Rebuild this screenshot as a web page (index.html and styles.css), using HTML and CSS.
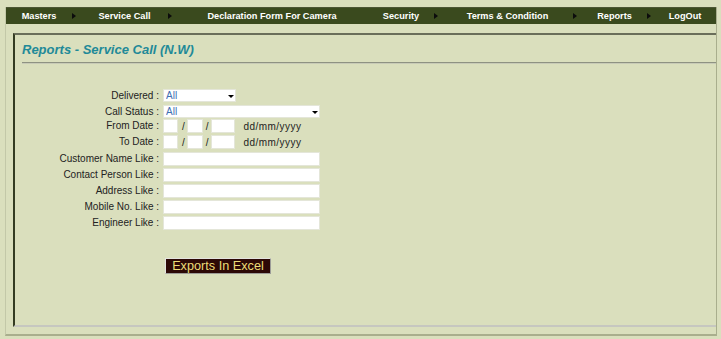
FILE: index.html
```html
<!DOCTYPE html>
<html lang="en">
<head>
    <meta charset="UTF-8">
    <meta name="viewport" content="width=device-width, initial-scale=1.0">
    <title>Reports - Service Call (N.W)</title>
    <link rel="stylesheet" href="styles.css">
</head>
<body>
<div class="frame">
    <!-- Top Menu -->
    <nav class="menu">
        <div class="menu-item m1"><span>Masters</span><i class="arrow"></i></div>
        <div class="menu-item m2"><span>Service Call</span><i class="arrow"></i></div>
        <div class="menu-item m3"><span>Declaration Form For Camera</span></div>
        <div class="menu-item m4"><span>Security</span><i class="arrow"></i></div>
        <div class="menu-item m5"><span>Terms &amp; Condition</span><i class="arrow"></i></div>
        <div class="menu-item m6"><span>Reports</span><i class="arrow"></i></div>
        <div class="menu-item m7"><span>LogOut</span></div>
    </nav>

    <div class="content">
        <div class="box">
            <h2 class="title">Reports - Service Call (N.W)</h2>
            <div class="rule"></div>

            <!-- Search Form -->
            <form class="search" action="#" method="get">
                <label class="lbl short">Delivered :</label>
                <div class="select w-short">
                    <select name="delivered"><option>All</option></select>
                    <svg class="caret" width="6" height="3" viewBox="0 0 6 3"><polygon points="0,0 6,0 3,3" fill="#000"/></svg>
                </div>

                <label class="lbl short">Call Status :</label>
                <div class="select w-long">
                    <select name="status"><option>All</option></select>
                    <svg class="caret" width="6" height="3" viewBox="0 0 6 3"><polygon points="0,0 6,0 3,3" fill="#000"/></svg>
                </div>

                <label class="lbl">From Date :</label>
                <div class="date">
                    <input type="text" class="d1"><span class="sep">/</span><input type="text" class="d2"><span class="sep s2">/</span><input type="text" class="d3"><span class="fmt">dd/mm/yyyy</span>
                </div>

                <label class="lbl">To Date :</label>
                <div class="date">
                    <input type="text" class="d1"><span class="sep">/</span><input type="text" class="d2"><span class="sep s2">/</span><input type="text" class="d3"><span class="fmt">dd/mm/yyyy</span>
                </div>

                <label class="lbl">Customer Name Like :</label>
                <input type="text" class="txt" name="customer">

                <label class="lbl">Contact Person Like :</label>
                <input type="text" class="txt" name="contact">

                <label class="lbl">Address Like :</label>
                <input type="text" class="txt" name="address">

                <label class="lbl">Mobile No. Like :</label>
                <input type="text" class="txt" name="mobile">

                <label class="lbl">Engineer Like :</label>
                <input type="text" class="txt" name="engineer">
            </form>

            <div class="actions">
                <button type="button" class="excel">Exports In Excel</button>
            </div>
        </div>
    </div>
</div>
</body>
</html>
```

FILE: styles.css
```css
body {
    margin: 0;
    background-color: #dadfbd;
    font-family: "Liberation Sans", Arial, sans-serif;
    font-size: 10px;
    color: #222;
}

.frame {
    margin: 7px 4px 0 5px;
    border-left: 1px solid #c3c8a8;
    border-right: 1px solid #a9ae8d;
    border-bottom: 2px solid #a9ae8d;
}

/* top menu */
.menu {
    display: flex;
    height: 17px;
    background-color: #3a4a1e;
    border-top: 1px solid #4c5634;
    box-sizing: border-box;
}

.menu-item {
    display: flex;
    align-items: center;
    color: #fff;
    font-weight: bold;
    font-size: 9.2px;
}

.menu-item span {
    flex: 1;
    text-align: center;
    white-space: nowrap;
}

.arrow {
    width: 0;
    height: 0;
    border-left: 4px solid #0c0c0c;
    border-top: 3px solid transparent;
    border-bottom: 3px solid transparent;
}

.m1 { width: 70px; }
.m2 { width: 96px; padding-left: 5px; box-sizing: border-box; }
.m3 { width: 196px; padding-left: 4px; box-sizing: border-box; }
.m4 { width: 70px; }
.m5 { width: 139px; padding-left: 4px; box-sizing: border-box; }
.m6 { width: 74px; padding-left: 5px; box-sizing: border-box; }
.m7 { flex: 1; padding-left: 3px; }

/* content box */
.content {
    padding: 9px 0 7px 7px;
}

.box {
    height: 294px;
    box-sizing: border-box;
    border-top: 2px solid #6a6e5a;
    border-left: 2px solid #343c22;
    border-bottom: 2px solid #c6c7c0;
}

.title {
    margin: 7px 0 0 7px;
    font-size: 13px;
    line-height: 16px;
    font-style: italic;
    font-weight: bold;
    color: #1f8a98;
}

.rule {
    margin: 4px 0 0 7px;
    border-top: 1px solid #8e9282;
    border-bottom: 1px solid #c8cbb7;
}

/* form grid */
.search {
    display: grid;
    grid-template-columns: 145px auto;
    grid-template-rows: 16px 14px 16px 17px 16px 16px 16px 16px 16px;
    column-gap: 3px;
    justify-items: start;
    align-items: start;
    margin-top: 25px;
}

.lbl {
    justify-self: end;
    line-height: 14px;
    padding-right: 1px;
    white-space: nowrap;
}

.lbl.short {
    line-height: 13px;
}

input[type="text"] {
    margin: 0;
    padding: 0 2px;
    height: 14px;
    border: 1px solid #e4e6d9;
    background-color: #fff;
    box-sizing: border-box;
    font-family: "Liberation Sans", Arial, sans-serif;
    font-size: 10px;
}

.txt { width: 157px; }

.select {
    position: relative;
    height: 13px;
}

.w-short { width: 73px; }
.w-long { width: 157px; }

.select select {
    -webkit-appearance: none;
    appearance: none;
    display: block;
    width: 100%;
    height: 100%;
    margin: 0;
    padding: 0 0 0 2px;
    border: 1px solid #e4e6d9;
    border-radius: 0;
    background-color: #fff;
    color: #3e6fb3;
    font-family: "Liberation Sans", Arial, sans-serif;
    font-size: 10px;
    line-height: 11px;
    box-sizing: border-box;
}

.caret {
    position: absolute;
    right: 2px;
    top: 6px;
}

.date {
    display: flex;
    align-items: center;
    height: 14px;
}

.date .d1 { width: 15px; }
.date .d2 { width: 16px; }
.date .d3 { width: 24px; }

.sep {
    margin: 0 2px 0 4px;
}

.sep.s2 {
    margin-left: 3px;
}

.fmt {
    margin-left: 9px;
    letter-spacing: 0.45px;
}

/* export button */
.actions {
    margin: 26px 0 0 150px;
}

.excel {
    display: block;
    width: 106px;
    height: 16px;
    padding: 0;
    background-color: #2c0906;
    color: #ecdd78;
    font-family: "Liberation Sans", Arial, sans-serif;
    font-size: 12.7px;
    line-height: 12px;
    border: 1px solid;
    border-color: #e4e4e0 #9c9c98 #9c9c98 #e4e4e0;
    cursor: pointer;
}
```
